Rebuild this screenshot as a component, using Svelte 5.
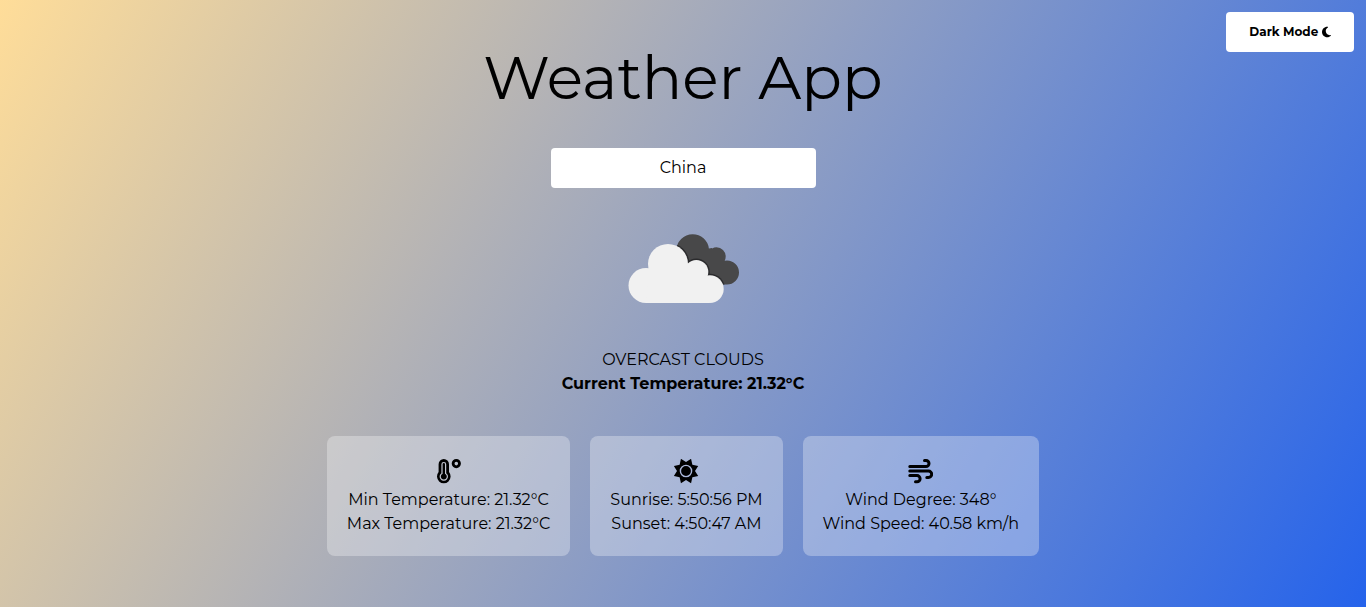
<script>
  let location = $state('China');
  let dark = $state(false);
  const spikes = Array.from({ length: 16 }, (_, i) => {
    const r = i % 2 ? 9 : 13.2;
    const a = ((i * 22.5 + 22.5) * Math.PI) / 180;
    return `${(12 + r * Math.sin(a)).toFixed(2)},${(12 - r * Math.cos(a)).toFixed(2)}`;
  }).join(' ');
</script>

<div class="app" class:dark>
  <button class="mode" onclick={() => (dark = !dark)}>
    {dark ? 'Light Mode' : 'Dark Mode'}
    <svg viewBox="0 0 384 512" width="9" height="12" aria-hidden="true">
      <path d="M223.5 32C100 32 0 132.3 0 256S100 480 223.500 480c60.600 0 115.500-24.200 155.800-63.400c5-4.900 6.300-12.500 3.100-18.700s-10.100-9.700-17-8.500c-9.800 1.700-19.800 2.600-30.100 2.600c-96.900 0-175.500-78.800-175.500-176c0-65.800 36-123.100 89.300-153.300c6.100-3.500 9.200-10.500 7.700-17.300s-7.300-11.900-14.300-12.500c-6.300-.5-12.600-.8-19-.8z" fill="currentColor" />
    </svg>
  </button>

  <main>
    <h1>Weather App</h1>
    <input type="text" aria-label="Location" bind:value={location} />

    <section class="current">
      <svg class="clouds" viewBox="0 0 112 72" width="112" height="72" aria-hidden="true">
        <clipPath id="back-cloud">
          <circle cx="65.7" cy="17.5" r="16.3" />
          <circle cx="89.5" cy="23.500" r="9.200" />
          <circle cx="100" cy="39.500" r="12" />
          <path d="M60 20 85 15 100 51.500H80L55 40Z" />
        </clipPath>
        <g clip-path="url(#back-cloud)">
          <rect width="112" height="72" fill="#484849" />
          <g fill="#2b2b2d">
            <circle cx="41" cy="31" r="21.500" />
            <circle cx="69.300" cy="39" r="13.500" />
            <circle cx="82.800" cy="56.100" r="15.400" />
          </g>
        </g>
        <g fill="#f1f1f1">
          <circle cx="19" cy="52.500" r="17.500" />
          <circle cx="41" cy="31" r="20" />
          <circle cx="69.300" cy="39" r="12" />
          <circle cx="82.800" cy="56.100" r="13.900" />
          <path d="M19 70 22 36 41 28 69 32 82 46V70Z" />
        </g>
      </svg>
      <p>OVERCAST CLOUDS</p>
      <p class="strong">Current Temperature: 21.32°C</p>
    </section>

    <section class="cards">
      <article>
        <svg viewBox="0 0 25 25" width="25" height="25" aria-hidden="true">
          <path d="M2.600 5.200a5.200 5.200 0 0 1 10.400 0v7.900a6.800 6.800 0 1 1-10.400 0Z" fill="currentColor" />
          <path d="M6 5.300a1.800 1.800 0 0 1 3.600 0v9.100a3.600 3.600 0 1 1-3.600 0Z" fill="none" stroke="#c4c7d2" stroke-width="1.200" />
          <circle cx="20.300" cy="4.600" r="3.200" fill="none" stroke="currentColor" stroke-width="2.800" />
        </svg>
        <p>Min Temperature: 21.32°C</p>
        <p>Max Temperature: 21.32°C</p>
      </article>
      <article>
        <svg viewBox="0 0 25 25" width="25" height="25" aria-hidden="true">
          <polygon points={spikes} fill="currentColor" />
          <circle cx="12" cy="12" r="5.600" fill="none" stroke="#abb7da" stroke-width="1.400" />
        </svg>
        <p>Sunrise: 5:50:56 PM</p>
        <p>Sunset: 4:50:47 AM</p>
      </article>
      <article>
        <svg viewBox="0 0 25 25" width="25" height="25" aria-hidden="true">
          <g fill="none" stroke="currentColor" stroke-width="3" stroke-linecap="round" stroke-linejoin="round">
            <path d="M1.800 7.500H18a3 3 0 0 0 0-6h-1.500" />
            <path d="M1.800 12H20.500a3.200 3.200 0 0 1 0 6.400h-1.700" />
            <path d="M1.800 16.600H9a3.100 3.100 0 0 1 0 6.200H7.500" />
          </g>
        </svg>
        <p>Wind Degree: 348°</p>
        <p>Wind Speed: 40.58 km/h</p>
      </article>
    </section>
  </main>
</div>

<style>
  :global(body) { margin: 0; }
  .app {
    box-sizing: border-box;
    min-height: 100vh;
    padding: 42px 20px 51px;
    background: linear-gradient(120deg, #ffdd99, #2563eb);
    color: #000;
    font-family: Montserrat, Inter, sans-serif;
    font-size: 16px;
    line-height: 24px;
  }
  .dark { background: linear-gradient(120deg, #334155, #0f172a); color: #fff; }
  .mode {
    position: absolute;
    top: 12px;
    right: 12px;
    width: 128px;
    height: 40px;
    padding: 0;
    border: 0;
    border-radius: 4px;
    background: #fff;
    color: #000;
    font: inherit;
    font-size: 12px;
    font-weight: 700;
  }
  .mode svg { vertical-align: -2px; }
  main { display: flex; flex-direction: column; align-items: center; }
  h1 { margin: 0; font-size: 60px; font-weight: 400; line-height: 72px; }
  input {
    box-sizing: border-box;
    width: 265px;
    max-width: 100%;
    height: 40px;
    margin-top: 34px;
    padding: 0 12px 2px;
    border: 0;
    border-radius: 4px;
    background: #fff;
    color: #000;
    font: inherit;
    text-align: center;
  }
  p { margin: 0; }
  .current { margin-top: 45px; text-align: center; }
  .clouds { display: block; margin: 0 auto 43px; }
  .strong { font-weight: 700; }
  .cards { display: flex; flex-wrap: wrap; justify-content: center; gap: 20px; margin-top: 40px; }
  article {
    padding: 23px 20px 20px;
    border-radius: 8px;
    background: rgba(255, 255, 255, .3);
    text-align: center;
  }
  article svg { display: block; margin: 0 auto 4px; }
</style>
